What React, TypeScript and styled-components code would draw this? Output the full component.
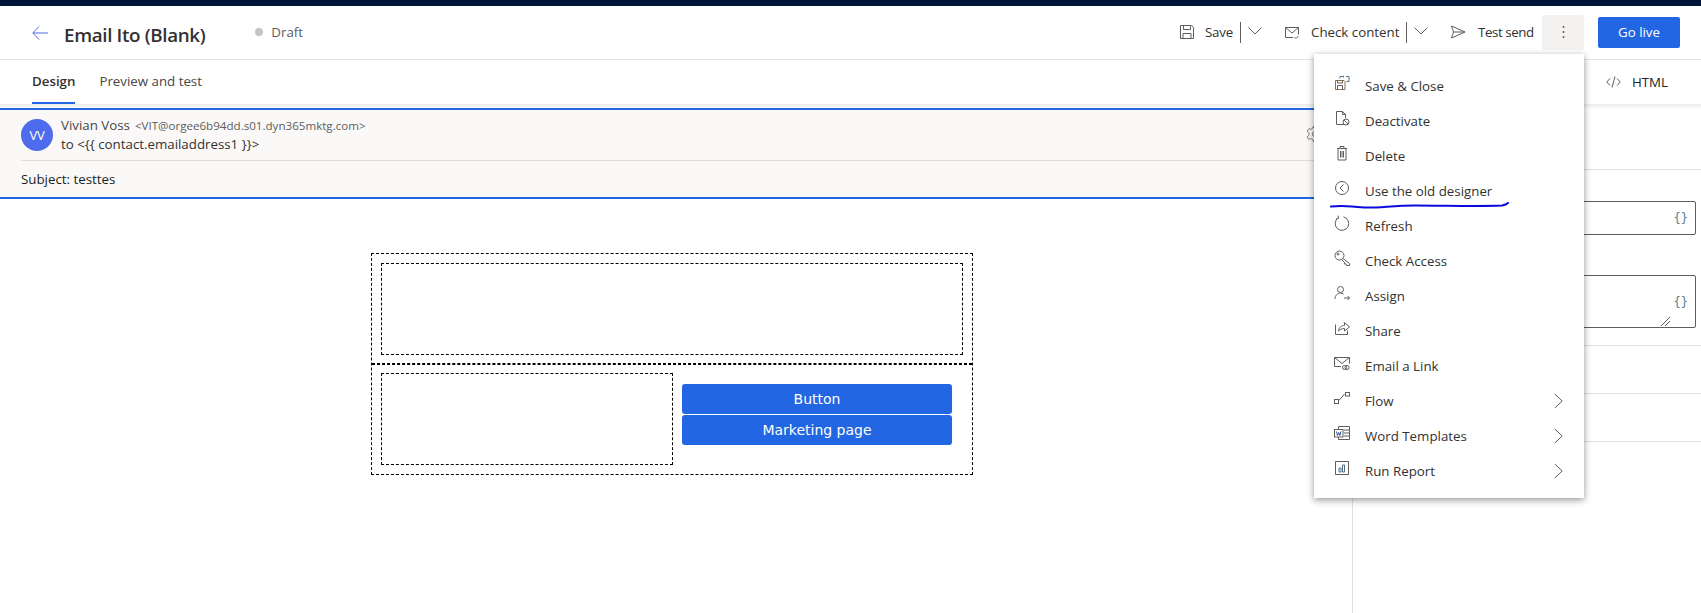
import React from "react";
import styled, { createGlobalStyle } from "styled-components";
import { Settings } from "lucide-react";

const Global = createGlobalStyle`
  html, body { margin: 0; padding: 0; background: #fff; }
  body { font-family: "Open Sans", "Noto Sans", sans-serif; }
  * { box-sizing: border-box; }
`;

const UI = `"Open Sans", "Noto Sans", sans-serif`;

const Page = styled.div`
  position: relative;
  width: 1701px;
  height: 613px;
  overflow: hidden;
  background: #fff;
  display: flex;
  flex-direction: column;
  font-family: ${UI};
  color: #323130;
`;
const TopStrip = styled.div`
  height: 6px;
  background: #001638;
  flex: none;
`;
const Header = styled.header`
  height: 54px;
  flex: none;
  display: flex;
  align-items: center;
  padding: 0 21px 1px 32px;
  border-bottom: 1px solid #e6e5e3;
`;
const BackIcon = styled.svg`
  width: 16px;
  height: 14px;
  flex: none;
  margin-top: 2px;
`;
const Title = styled.h1`
  margin: 5px 0 0 16px;
  font-size: 18.8px;
  font-weight: 600;
  color: #323130;
  letter-spacing: -0.35px;
`;
const StatusDot = styled.span`
  width: 8px;
  height: 8px;
  border-radius: 50%;
  background: #c4c4c4;
  margin: 0 0 0 50px;
`;
const StatusText = styled.span`
  margin: 0 0 0 8px;
  font-size: 13.3px;
  color: #605e5c;
`;
const Toolbar = styled.div`
  margin-left: auto;
  display: flex;
  align-items: center;
`;
const ToolIcon = styled.svg<{ $ml?: number }>`
  width: 16px;
  height: 16px;
  flex: none;
  margin-left: ${(p) => p.$ml ?? 0}px;
`;
const ToolLabel = styled.span<{ $w: number; $ml: number; $ls?: number }>`
  width: ${(p) => p.$w}px;
  margin-left: ${(p) => p.$ml}px;
  font-size: 13.3px;
  letter-spacing: ${(p) => p.$ls ?? 0}px;
  color: #323130;
  white-space: nowrap;
`;
const ToolSep = styled.span`
  width: 1px;
  height: 21px;
  background: #605e5c;
  margin-left: 7px;
`;
const Chevron = styled.svg`
  width: 14px;
  height: 8px;
  margin-left: 7px;
  margin-top: -3px;
  flex: none;
`;
const MoreButton = styled.div`
  width: 42px;
  height: 35px;
  margin-left: 8px;
  background: #f3f2f1;
  border-radius: 2px;
  display: flex;
  align-items: center;
  justify-content: center;
`;
const GoLive = styled.button`
  width: 82px;
  height: 31px;
  margin-left: 14px;
  border: 0;
  border-radius: 2px;
  background: #2266e3;
  color: #fff;
  font-family: ${UI};
  font-size: 13.3px;
  padding: 0;
`;
const TabRow = styled.nav`
  height: 44px;
  flex: none;
  display: flex;
  align-items: stretch;
  padding: 0 33px 0 32px;
`;
const Tab = styled.div<{ $active?: boolean }>`
  display: flex;
  align-items: center;
  height: 44px;
  margin-right: 24px;
  font-size: 13.3px;
  color: ${(p) => (p.$active ? "#323130" : "#484644")};
  font-weight: ${(p) => (p.$active ? 600 : 400)};
  border-bottom: ${(p) => (p.$active ? "2px solid #2266e3" : "2px solid transparent")};
`;
const HtmlTab = styled.div`
  margin-left: auto;
  display: flex;
  align-items: center;
  gap: 11px;
  font-size: 13.3px;
  color: #201f1e;
`;
const Shade = styled.div`
  height: 4px;
  flex: none;
  background: linear-gradient(#ebebeb, #fafafa);
`;
const Body = styled.div`
  flex: 1;
  display: grid;
  grid-template-columns: 1352px 1fr;
  min-height: 0;
`;
const LeftColumn = styled.main`
  min-width: 0;
`;
const EmailHead = styled.section`
  position: relative;
  height: 91px;
  background: #faf9f8;
  border-top: 2px solid #2266e3;
  border-bottom: 2px solid #2266e3;
  padding: 9px 21px 0;
`;
const SenderRow = styled.div`
  display: flex;
  gap: 8px;
  height: 42px;
  border-bottom: 1px solid #e1dfdd;
`;
const Avatar = styled.div`
  width: 32px;
  height: 32px;
  border-radius: 50%;
  background: #4f6bed;
  color: #fff;
  font-size: 13px;
  letter-spacing: -0.2px;
  display: flex;
  align-items: center;
  justify-content: center;
`;
const SenderLines = styled.div`
  display: flex;
  flex-direction: column;
  font-size: 13.3px;
  line-height: 19px;
  margin-top: -3px;
  color: #323130;
`;
const SenderName = styled.span`
  color: #484644;
`;
const SenderMail = styled.span`
  margin-left: 5px;
  font-size: 11.6px;
  color: #605e5c;
`;
const SubjectLine = styled.div`
  height: 36px;
  display: flex;
  align-items: center;
  font-size: 13.3px;
  color: #201f1e;
`;
const GearSlot = styled.span`
  position: absolute;
  right: 27px;
  top: 14px;
  display: flex;
  color: #605e5c;
`;
const Canvas = styled.div`
  padding: 54px 0 0 371px;
  font-family: "DejaVu Sans", sans-serif;
`;
const MailTable = styled.div`
  width: 602px;
  height: 222px;
  border: 1px dashed #000;
  display: flex;
  flex-direction: column;
`;
const MailRow = styled.div<{ $divider?: boolean }>`
  height: 110px;
  flex: none;
  display: flex;
  padding: ${(p) => (p.$divider ? "8px" : "9px")} 9px 0;
  border-top: ${(p) => (p.$divider ? "1px dashed #000" : "0")};
  border-bottom: ${(p) => (p.$divider ? "0" : "1px dashed #000")};
`;
const ImageSlot = styled.div<{ $w: number }>`
  width: ${(p) => p.$w}px;
  height: 92px;
  border: 1px dashed #000;
  flex: none;
`;
const ButtonStack = styled.div`
  margin: 11px 0 0 9px;
  width: 270px;
  display: flex;
  flex-direction: column;
  gap: 1px;
`;
const MailButton = styled.div`
  height: 30px;
  background: #2266e3;
  border-radius: 3px;
  color: #fff;
  font-size: 14px;
  display: flex;
  align-items: center;
  justify-content: center;
`;
const SidePanel = styled.aside`
  border-left: 1px solid #e1dfdd;
  padding-right: 5px;
  display: flex;
  flex-direction: column;
`;
const PanelRule = styled.div<{ $mt: number }>`
  height: 1px;
  flex: none;
  margin-top: ${(p) => p.$mt}px;
  margin-right: -5px;
  background: #e1dfdd;
`;
const FieldBox = styled.div<{ $h: number; $mt: number }>`
  position: relative;
  height: ${(p) => p.$h}px;
  margin-top: ${(p) => p.$mt}px;
  flex: none;
  border: 1px solid #605e5c;
  border-radius: 2px;
  display: flex;
  align-items: center;
  justify-content: flex-end;
  padding-right: 7px;
`;
const Braces = styled.span`
  font-family: "DejaVu Sans Mono", monospace;
  font-size: 12px;
  color: #60808c;
`;
const Grip = styled.svg`
  position: absolute;
  right: 25px;
  bottom: 1px;
  width: 9px;
  height: 9px;
`;
const Menu = styled.div`
  position: absolute;
  left: 1314px;
  top: 54px;
  width: 270px;
  height: 444px;
  padding: 14px 0;
  background: #fff;
  box-shadow: 0 2px 7px rgba(0, 0, 0, 0.42);
  z-index: 5;
`;
const MenuRow = styled.div`
  height: 35px;
  display: flex;
  align-items: center;
  padding: 0 21px 0 20px;
  font-size: 13.3px;
  color: #323130;
`;
const MenuIcon = styled.svg`
  width: 16px;
  height: 16px;
  flex: none;
  margin: -5px 15px 0 0;
`;
const MenuArrow = styled.svg`
  width: 9px;
  height: 16px;
  margin-left: auto;
`;
const Scribble = styled.svg`
  position: absolute;
  left: 1330px;
  top: 199px;
  width: 180px;
  height: 12px;
  z-index: 6;
`;

const ic = { fill: "none", stroke: "#605e5c", strokeWidth: 1 } as const;

const icons: Record<string, React.ReactNode> = {
  saveClose: (
    <g {...ic}>
      <path d="M1.5 5.5h8.5l1 1v8h-9.500z" stroke="#8a6d50" />
      <path d="M3.500 14.500v-4h5v4M3.500 5.500v2.500h5v-2.500" />
      <path d="M6 3.500v-2h3M12 1.500h3v5h-2.500" stroke="#50708a" />
      <path d="M9 1l1 .5l-1 .8" />
    </g>
  ),
  deactivate: (
    <g {...ic}>
      <path d="M10 14.500H2.500v-13h6l3 3v3.500M8.500 1.500v3h3" />
      <circle cx="12" cy="12" r="3" />
      <path d="M10 10l4 4" />
    </g>
  ),
  del: (
    <g {...ic}>
      <path d="M3 3.500h10M6 3.500V1.500h4v2M4 3.500v11.500h8V3.500" />
      <path d="M6.500 6v6.500M8 6v6.500M9.500 6v6.500" />
    </g>
  ),
  oldDesigner: (
    <g {...ic}>
      <circle cx="8" cy="8" r="6.500" />
      <path d="M9.500 4.500L6 8l3.500 3.500" />
    </g>
  ),
  refresh: (
    <g {...ic}>
      <path d="M4.300 2.800A6.800 6.800 0 1 0 9.500 1.900" />
      <path d="M4 .6l.6 2.600-2.400.8" />
    </g>
  ),
  key: (
    <g {...ic}>
      <circle cx="5.500" cy="5.500" r="4.500" />
      <circle cx="4" cy="4" r="1" />
      <path d="M9 8.500l6.500 5v2h-3l-.5-1.500h-1.500V12.500L7.800 9.800" />
    </g>
  ),
  assign: (
    <g {...ic}>
      <circle cx="6.500" cy="4.500" r="3" />
      <path d="M1 14c0-3.500 2.500-6 5.500-6 1 0 2 .3 3 1" />
      <path d="M10 13h5.500M13.500 11l2 2-2 2" />
    </g>
  ),
  share: (
    <g {...ic}>
      <path d="M1.500 4.500v10h12v-4" />
      <path d="M4.500 11c.5-4 3-5.500 6-5.500V2.500l5 4.500-5 4V8.500c-2.500 0-4.500.8-6 2.500z" />
    </g>
  ),
  emailLink: (
    <g {...ic}>
      <path d="M7 11.500H.5v-9h15v6" />
      <path d="M.5 2.500L8 8.500l7.500-6" />
      <circle cx="10.500" cy="12.500" r="2" />
      <circle cx="13" cy="12.500" r="2" />
    </g>
  ),
  flow: (
    <g {...ic}>
      <rect x="0.500" y="9.500" width="4" height="4" />
      <rect x="11.500" y="2.500" width="4" height="3.500" />
      <path d="M5 10.500L10.500 4" />
    </g>
  ),
  word: (
    <g {...ic}>
      <path d="M4.500 4V1.500h11v13h-11V12" />
      <path d="M10 5h5M10 8h5M10 11h5" />
      <rect x="0.500" y="4.500" width="8.500" height="7.500" fill="#fff" />
      <path d="M2.500 6.500l1 4 1.200-3 1.200 3 1-4" stroke="#2b579a" />
    </g>
  ),
  report: (
    <g {...ic}>
      <path d="M3 1.500H1.500v13H3M13 1.500h1.500v13H13M1.500 1.500h13M1.500 14.500h13" />
      <path d="M5 8v4h2V8zM8.500 5v7h2V5z" stroke="#50708a" />
    </g>
  ),
};

const items: { label: string; icon: string; sub?: boolean }[] = [
  { label: "Save & Close", icon: "saveClose" },
  { label: "Deactivate", icon: "deactivate" },
  { label: "Delete", icon: "del" },
  { label: "Use the old designer", icon: "oldDesigner" },
  { label: "Refresh", icon: "refresh" },
  { label: "Check Access", icon: "key" },
  { label: "Assign", icon: "assign" },
  { label: "Share", icon: "share" },
  { label: "Email a Link", icon: "emailLink" },
  { label: "Flow", icon: "flow", sub: true },
  { label: "Word Templates", icon: "word", sub: true },
  { label: "Run Report", icon: "report", sub: true },
];

const ChevronDown = () => (
  <Chevron viewBox="0 0 14 8">
    <path d="M.5 .5L7 7l6.500-6.500" fill="none" stroke="#605e5c" />
  </Chevron>
);

export default function App() {
  return (
    <Page>
      <Global />
      <TopStrip />
      <Header>
        <BackIcon viewBox="0 0 16 14">
          <path d="M16 7H1M7 .5L.8 7 7 13.500" fill="none" stroke="#4f6bed" />
        </BackIcon>
        <Title>Email Ito (Blank)</Title>
        <StatusDot />
        <StatusText>Draft</StatusText>
        <Toolbar>
          <ToolIcon viewBox="0 0 16 16">
            <g {...ic}>
              <path d="M1.500 1.500h11l2 2v11h-13z" />
              <path d="M4.500 1.500v4h7v-4M4 14.500v-5h8v5" />
            </g>
          </ToolIcon>
          <ToolLabel $ml={10} $w={28} $ls={-0.2}>Save</ToolLabel>
          <ToolSep />
          <ChevronDown />
          <ToolIcon $ml={22} viewBox="0 0 16 16">
            <g {...ic}>
              <path d="M9 13.500H1.500v-10h13v7" />
              <path d="M1.500 3.500L8 9l6.500-5.500" />
              <path d="M10.500 13l1.500 1.500 2.500-2.500" />
            </g>
          </ToolIcon>
          <ToolLabel $ml={11} $w={88}>Check content</ToolLabel>
          <ToolSep />
          <ChevronDown />
          <ToolIcon $ml={22} viewBox="0 0 16 16">
            <path d="M1.500 2L15 8 1.500 14 3.500 8zM3.500 8H15" {...ic} />
          </ToolIcon>
          <ToolLabel $ml={12} $w={56} $ls={-0.4}>Test send</ToolLabel>
          <MoreButton>
            <svg width="3" height="14" viewBox="0 0 3 14">
              <circle cx="1.500" cy="2" r="1" fill="#605e5c" />
              <circle cx="1.500" cy="7" r="1" fill="#605e5c" />
              <circle cx="1.500" cy="12" r="1" fill="#605e5c" />
            </svg>
          </MoreButton>
          <GoLive>Go live</GoLive>
        </Toolbar>
      </Header>
      <TabRow>
        <Tab $active>Design</Tab>
        <Tab>Preview and test</Tab>
        <HtmlTab>
          <svg width="15" height="14" viewBox="0 0 15 14">
            <path d="M4 3.500L.8 7 4 10.500M11 3.500L14.200 7 11 10.500M9 1.500L6 12.500" {...ic} />
          </svg>
          <span>HTML</span>
        </HtmlTab>
      </TabRow>
      <Shade />
      <Body>
        <LeftColumn>
          <EmailHead>
            <SenderRow>
              <Avatar>VV</Avatar>
              <SenderLines>
                <span>
                  <SenderName>Vivian Voss</SenderName>
                  <SenderMail>&lt;VIT@orgee6b94dd.s01.dyn365mktg.com&gt;</SenderMail>
                </span>
                <span>to &lt;{"{{"} contact.emailaddress1 {"}}"}&gt;</span>
              </SenderLines>
            </SenderRow>
            <SubjectLine>Subject: testtes</SubjectLine>
            <GearSlot>
              <Settings size={20} strokeWidth={1} />
            </GearSlot>
          </EmailHead>
          <Canvas>
            <MailTable>
              <MailRow>
                <ImageSlot $w={582} />
              </MailRow>
              <MailRow $divider>
                <ImageSlot $w={292} />
                <ButtonStack>
                  <MailButton>Button</MailButton>
                  <MailButton>Marketing page</MailButton>
                </ButtonStack>
              </MailRow>
            </MailTable>
          </Canvas>
        </LeftColumn>
        <SidePanel>
          <PanelRule $mt={61} />
          <FieldBox $h={34} $mt={31}>
            <Braces>{"{}"}</Braces>
          </FieldBox>
          <FieldBox $h={53} $mt={40}>
            <Braces>{"{}"}</Braces>
            <Grip viewBox="0 0 9 9">
              <path d="M0 9L9 0M4 9L9 4" stroke="#605e5c" fill="none" />
            </Grip>
          </FieldBox>
          <PanelRule $mt={17} />
          <PanelRule $mt={47} />
          <PanelRule $mt={47} />
        </SidePanel>
      </Body>
      <Menu>
        {items.map((it) => (
          <MenuRow key={it.label}>
            <MenuIcon viewBox="0 0 16 16">{icons[it.icon]}</MenuIcon>
            <span>{it.label}</span>
            {it.sub && (
              <MenuArrow viewBox="0 0 9 16">
                <path d="M.8 1l7.400 7-7.400 7" fill="none" stroke="#605e5c" />
              </MenuArrow>
            )}
          </MenuRow>
        ))}
      </Menu>
      <Scribble viewBox="0 0 180 12">
        <path
          d="M1 7.500C12 6 22 7 34 8.500C50 9 62 6.500 85 6.500C115 6.500 150 7.500 172 6.500C175 6 177 5 178 4"
          fill="none"
          stroke="#0a0ae0"
          strokeWidth="2"
          strokeLinecap="round"
        />
      </Scribble>
    </Page>
  );
}
